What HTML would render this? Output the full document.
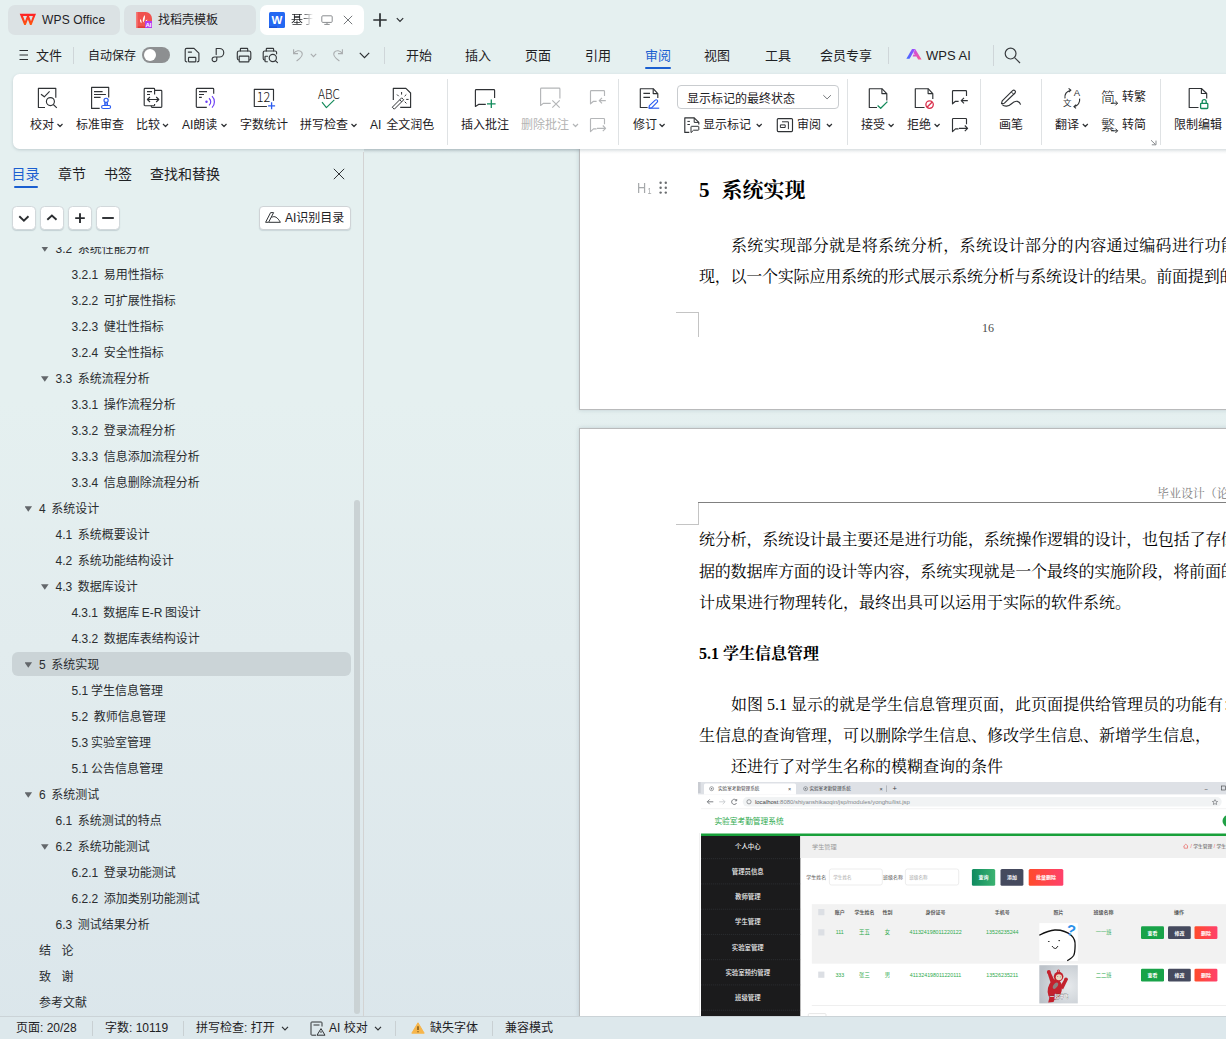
<!DOCTYPE html>
<html lang="zh-CN">
<head>
<meta charset="utf-8">
<title>WPS Office</title>
<style>
*{box-sizing:border-box;margin:0;padding:0}
html,body{width:1226px;height:1039px;overflow:hidden}
body{position:relative;background:linear-gradient(180deg,#e5f0f0 0,#e5f0f0 400px,#e2ecee 650px,#dbe6eb 1039px);font-family:"Liberation Sans","Noto Sans CJK SC",sans-serif;color:#1e2124;font-size:12px}
.abs{position:absolute}
.t{position:absolute;white-space:nowrap;line-height:1}
svg{position:absolute;overflow:visible}
/* title tabs */
.tab{position:absolute;top:5px;height:30px;border-radius:7px;background:#dbe2e4}
/* menu */
.menu .t{font-size:13px;top:49px;color:#1e2124}
.vsep{position:absolute;width:1px;background:#cfd6d9}
/* ribbon */
#ribbon{position:absolute;left:13px;top:74px;width:1220px;height:75px;background:#fff;border-radius:6.500px 0 0 6.500px;box-shadow:0 1px 3px rgba(120,140,150,.35)}
.rl{position:absolute;white-space:nowrap;line-height:1;font-size:12px;top:119px;color:#1e2124}
.rsep{position:absolute;top:79px;height:66px;width:1px;background:#dfe2e4}
.dis{color:#b4b4b4}
/* side panel */
#side{position:absolute;left:0;top:152px;width:363px;height:864px}
.ptab{position:absolute;top:167px;font-size:14px;line-height:1;white-space:nowrap;color:#1e2124}
.sbtn{position:absolute;top:206px;width:23.500px;height:23.500px;border:1px solid #d2d8db;border-radius:4.500px;background:#fff;box-shadow:0 1px 1px rgba(120,140,150,.3)}
#tree{position:absolute;left:0;top:247px;width:352px;height:769px;overflow:hidden}
.ti{position:absolute;left:0;height:26px;line-height:26px;font-size:12px;white-space:nowrap;color:#2a2d30;word-spacing:-.5px}
.tri{position:absolute;width:7.600px;height:5.600px;background:#63676b;clip-path:polygon(0 0,100% 0,50% 100%)}
/* doc */
#doc{position:absolute;left:364px;top:149px;width:862px;height:867px;overflow:hidden}
.page{position:absolute;background:#fff;border:1px solid #b9babb;box-shadow:0 0 4px rgba(110,130,140,.3)}
.dt{position:absolute;white-space:nowrap;line-height:1;font-family:"Liberation Serif","Noto Serif CJK SC",serif;color:#000}
.body{font-size:16px;letter-spacing:.2px}
/* status */
#status{position:absolute;left:0;top:1016px;width:1226px;height:23px;background:#dde8ec;border-top:1px solid #cbd3d7}
#status .t{top:5px;font-size:12px;color:#1e2124}
#status .vsep{top:4px;height:15px;background:#c9d0d3}
</style>
</head>
<body>

<!-- ===== TITLE TABS ===== -->
<div id="titlebar">
  <div class="tab" style="left:8px;width:112px"></div>
  <div class="tab" style="left:124px;width:132px"></div>
  <div class="tab" style="left:260px;width:104px;background:#fff"></div>
  <!-- WPS logo -->
  <svg style="left:18px;top:12px" width="20" height="15" viewBox="18 12 20 15">
    <defs><linearGradient id="wg" x1="0" y1="0" x2="0" y2="1"><stop offset="0" stop-color="#ff1f26"/><stop offset="1" stop-color="#ff5a0e"/></linearGradient></defs>
    <path d="M19.700 13.800H36L31.600 25H30L27.900 19.600L25.800 25H24.200Z M23 16L25 21.200L27 16Z M29.300 16H29L31 21.200L32.900 16Z" fill="url(#wg)" fill-rule="evenodd"/>
  </svg>
  <div class="t" style="left:42px;top:14px;font-size:12px;letter-spacing:.15px">WPS Office</div>
  <!-- docer icon -->
  <svg style="left:136px;top:12px" width="16" height="16" viewBox="0 0 16 16">
    <path d="M0 0H9.5A6.5 6.5 0 0 1 16 6.5V16H0Z" fill="#f0524f"/>
    <rect x="0" y="14.4" width="16" height="1.6" fill="#e23a38"/>
    <rect x="0" y="0" width="1.6" height="16" fill="#f47a77"/>
    <path d="M5.4 11.2C3.9 9.8 3.7 8 4.4 6.9C5.4 8 5.8 9.6 5.4 11.2ZM7.2 10.6C6.2 7.8 7.2 4.6 8.8 2.9C9.3 5.4 8.7 8.6 7.2 10.6ZM8.6 10.9C9 9.3 10.2 8 11.4 7.6C11.2 9.1 10.1 10.4 8.6 10.9Z" fill="#fff"/>
    <rect x="9" y="9" width="7" height="7" fill="#b43cf0"/>
    <text x="12.5" y="14.8" font-size="6" font-weight="700" fill="#fff" text-anchor="middle" font-family="Liberation Sans,sans-serif">AI</text>
  </svg>
  <div class="t" style="left:158px;top:14px;font-size:12px">找稻壳模板</div>
  <!-- W doc icon -->
  <svg style="left:269px;top:12px" width="16" height="16" viewBox="0 0 16 16">
    <rect width="16" height="16" rx="1.5" fill="#2468f2"/>
    <rect x="0" y="14.4" width="8" height="1.6" fill="#1a55d8"/>
    <text x="8" y="12.2" font-size="11.5" font-weight="700" fill="#fff" text-anchor="middle" font-family="Liberation Sans,sans-serif">W</text>
  </svg>
  <div class="t" style="left:291px;top:14px;font-size:12px;width:25px;overflow:hidden;-webkit-mask-image:linear-gradient(90deg,#000 38%,transparent 88%);mask-image:linear-gradient(90deg,#000 38%,transparent 88%)">基于实</div>
  <svg style="left:321px;top:15px" width="12" height="10" viewBox="0 0 12 10" fill="none" stroke="#8a8d90" stroke-width="1">
    <rect x="0.8" y="0.8" width="10.4" height="6.6" rx="1"/><path d="M6 7.4V9.3M3.3 9.4H8.7"/>
  </svg>
  <svg style="left:343px;top:15px" width="10" height="10" viewBox="0 0 10 10" fill="none" stroke="#75787b" stroke-width="1">
    <path d="M0.8 0.8L9.2 9.2M9.2 0.8L0.8 9.2"/>
  </svg>
  <svg style="left:373px;top:13px" width="14" height="14" viewBox="0 0 14 14" fill="none" stroke="#2b2e31" stroke-width="1.7">
    <path d="M7 0.3V13.7M0.3 7H13.7"/>
  </svg>
  <svg style="left:396px;top:17px" width="8" height="6" viewBox="0 0 8 6" fill="none" stroke="#2b2e31" stroke-width="1.2">
    <path d="M0.8 1.2L4 4.4L7.2 1.2"/>
  </svg>
</div>

<!-- ===== MENU ROW ===== -->
<div class="menu">
  <svg style="left:19px;top:49px" width="10" height="12" viewBox="0 0 10 12" fill="none" stroke="#2b2e31" stroke-width="1">
    <path d="M0.5 1.5H9M0.5 6H9M0.5 10.5H9"/>
  </svg>
  <div class="t" style="left:36px">文件</div>
  <div class="vsep" style="left:73px;top:47px;height:17px"></div>
  <div class="t" style="left:88px;font-size:12px;top:50px">自动保存</div>
  <div class="abs" style="left:142px;top:47px;width:28px;height:16px;border-radius:8px;background:#8d8f91"></div>
  <div class="abs" style="left:144px;top:49px;width:12px;height:12px;border-radius:6px;background:#fff"></div>
  <!-- save / export / print / preview -->
  <svg style="left:180px;top:42px" width="105" height="26" viewBox="180 42 105 26" fill="none" stroke="#35383b" stroke-width="1.150" stroke-linejoin="round" stroke-linecap="round">
    <path d="M186.800 61.800H186.400A1.400 1.400 0 0 1 185.200 60.400V49.800A1.500 1.500 0 0 1 186.700 48.300H194L198.900 53.200V60.400A1.400 1.400 0 0 1 197.600 61.800H197.300"/>
    <rect x="188.500" y="57.400" width="7.300" height="4.400" rx=".5"/><path d="M188.300 52.100H191.500"/>
    <path d="M216.200 54.600V48.500H219.500A4.250 4.250 0 0 1 219.500 57H214.700A2.350 2.350 0 1 0 216.800 59.400V57.200"/>
    <path d="M240.400 51V48.900A.6 .6 0 0 1 241 48.300H247.100A.6 .6 0 0 1 247.700 48.900V51"/>
    <rect x="237.300" y="51" width="13.500" height="9" rx="1.800"/>
    <rect x="239.200" y="56.100" width="9.700" height="5.700" rx=".6" fill="#e5f0f0"/>
    <path d="M266.300 51V48.900A.6 .6 0 0 1 266.900 48.300H273A.6 .6 0 0 1 273.600 48.900V51"/>
    <path d="M264.800 60H264.600A1.600 1.600 0 0 1 263.200 58.400V52.600A1.600 1.600 0 0 1 264.800 51H275A1.600 1.600 0 0 1 276.600 52.600V53.800"/>
    <path d="M267.400 61.700H265.600A.6 .6 0 0 1 265 61.100V56.800A.6 .6 0 0 1 265.600 56.200H267.600"/>
    <circle cx="272.800" cy="58" r="3.600"/><path d="M275.400 60.600L277.500 62.700"/>
  </svg>
  <!-- undo -->
  <svg style="left:292px;top:48px" width="12" height="14" viewBox="0 0 12 14" fill="none" stroke="#a9acae" stroke-width="1.1">
    <path d="M1.6 1.2V5.6H6M1.8 5.4C3.6 2.2 8 1.8 9.8 4.4C11.4 7 9 10 4.6 13"/>
  </svg>
  <svg style="left:310px;top:53px" width="7" height="5" viewBox="0 0 7 5" fill="none" stroke="#a9acae" stroke-width="1.1"><path d="M0.8 0.8L3.5 3.6L6.2 0.8"/></svg>
  <!-- redo -->
  <svg style="left:332px;top:48px" width="12" height="14" viewBox="0 0 12 14" fill="none" stroke="#a9acae" stroke-width="1.1">
    <path d="M10.4 1.2V5.6H6M10.2 5.4C8.4 2.2 4 1.8 2.2 4.4C0.6 7 3 10 7.4 13"/>
  </svg>
  <svg style="left:359px;top:52px" width="11" height="7" viewBox="0 0 11 7" fill="none" stroke="#2b2e31" stroke-width="1.2"><path d="M0.8 0.9L5.5 5.6L10.2 0.9"/></svg>
  <div class="vsep" style="left:384px;top:47px;height:17px"></div>
  <div class="t" style="left:406px">开始</div>
  <div class="t" style="left:465px">插入</div>
  <div class="t" style="left:525px">页面</div>
  <div class="t" style="left:585px">引用</div>
  <div class="t" style="left:645px;color:#1b5fd0">审阅</div>
  <div class="abs" style="left:645px;top:67px;width:26px;height:2px;background:#1b5fd0;border-radius:1px"></div>
  <div class="t" style="left:704px">视图</div>
  <div class="t" style="left:765px">工具</div>
  <div class="t" style="left:820px">会员专享</div>
  <div class="vsep" style="left:888px;top:47px;height:17px"></div>
  <!-- WPS AI logo -->
  <svg style="left:906px;top:48px" width="16" height="13" viewBox="0 0 16 13">
    <defs><linearGradient id="ai1" x1="0" y1="1" x2="1" y2="0"><stop offset="0" stop-color="#3b6cff"/><stop offset="1" stop-color="#a24bff"/></linearGradient>
    <linearGradient id="ai2" x1="0" y1="0" x2="1" y2="1"><stop offset="0" stop-color="#c04cf5"/><stop offset="1" stop-color="#ff5a8a"/></linearGradient></defs>
    <path d="M0.4 10.8L6 1H9.2L3.6 10.8Z" fill="url(#ai1)"/>
    <path d="M7.4 5.2L9.2 1L15.6 11.6H12.2L10.4 8.6H6.6L7.4 6.4H9.2Z" fill="url(#ai2)"/>
  </svg>
  <div class="t" style="left:926px">WPS AI</div>
  <div class="vsep" style="left:993px;top:45px;height:21px"></div>
  <svg style="left:1004px;top:47px" width="17" height="17" viewBox="0 0 17 17" fill="none" stroke="#3a3d40" stroke-width="1.2">
    <circle cx="6.6" cy="6.6" r="5.4"/><path d="M10.6 10.6L16 16"/>
  </svg>
</div>

<!-- ===== RIBBON ===== -->
<div id="ribbon"></div>
<div id="ribbon-items">
<div class="abs" style="left:677px;top:85px;width:162px;height:24px;border:1px solid #c9cccf;border-radius:4px;background:#fff"></div>
<svg style="left:0;top:75px" width="1226" height="75" viewBox="0 75 1226 75" fill="none" stroke="#2f3235" stroke-width="1.15" stroke-linejoin="round">
  <!-- 1 校对 -->
  <path d="M45 107.5H38.4V88.4H55.8V97.8"/><path d="M41 94.2L44.3 96.8L49.6 91.4"/><circle cx="50.4" cy="101.6" r="4"/><path d="M53.3 104.5L56.8 107.8"/>
  <!-- 2 标准审查 -->
  <path d="M99.7 108.4H91.6V87.4H108.7V97.5"/><path d="M94 91.6H102.6M94 94.5H105.9M94 97.4H100.6"/>
  <g stroke="#2b5cf0"><circle cx="106.1" cy="100.3" r="2.1"/><path d="M105 102.3V105.4M107.2 102.3V105.4" stroke-width="1.6"/><rect x="101.6" y="105.5" width="9" height="3" rx="1.5"/></g>
  <!-- 3 比较 -->
  <path d="M154.6 94.6V89.2A.8 .8 0 0 0 153.8 88.4H145A.8 .8 0 0 0 144.2 89.2V104.9A.8 .8 0 0 0 145 105.7H153.8A.8 .8 0 0 0 154.6 104.9V104"/>
  <path d="M154.6 90.4H161A.8 .8 0 0 1 161.8 91.2V106.6A.8 .8 0 0 1 161 107.4H152.1A.8 .8 0 0 1 151.3 106.6V105.7"/>
  <path d="M147 91.6H152M147 94.5H150M147.6 99.5H158.6M150 97L147.4 99.5L150 102M156.2 97L158.8 99.5L156.2 102"/>
  <!-- 4 AI朗读 -->
  <path d="M206.8 107.4H197.1A.8 .8 0 0 1 196.3 106.6V89.2A.8 .8 0 0 1 197.1 88.4H212.9A.8 .8 0 0 1 213.7 89.2V93.8"/><path d="M199 91.6H207M199 94.5H204M199 97.4H201.8"/>
  <g stroke="#6a3df5"><circle cx="206.5" cy="101.8" r="1.2" fill="#6a3df5" stroke="none"/><path d="M209 98.2A4.6 4.6 0 0 1 209 105.4M212 96.2A8 8 0 0 1 212 107.6"/></g>
  <!-- 5 字数统计 -->
  <path d="M266.9 106.5H254.3V89.4H273.5V100.8"/>
  <g stroke="#2b5cf0" stroke-width="1.3"><path d="M271.6 102.3V109.3M268.1 105.8H275.1"/></g>
  <!-- 6 拼写检查 -->
  <path d="M322 102.2L326.4 107.6L334.3 99.8" stroke="#138a5a"/>
  <!-- 7 AI 全文润色 -->
  <path d="M393.3 100V88.4H405.9L410.6 93V107.4H400.2"/>
  <path d="M401.7 97.8L403.7 99.8L394.3 109.2L392.3 107.2Z M399.7 99.8L401.7 101.8" stroke-width="1"/>
  <path d="M401.6 92V94.6M404.6 96.2L406.3 94.5M406.2 99.4H408.6M404.7 101.7L406.4 103.4M397 94.5L398.7 96.2" stroke-width="1"/>
  <!-- 8 插入批注 -->
  <path d="M485.8 104.4H478.5L475.4 106.5V90.4A.8 .8 0 0 1 476.2 89.6H493.8A.8 .8 0 0 1 494.6 90.4V97.9"/>
  <path d="M491.3 99.5V108.1M487 103.8H495.6" stroke="#0f8a5a" stroke-width="1.3"/>
  <!-- 9 删除批注 (disabled) -->
  <g stroke="#b4b6b8"><path d="M550.7 103.4H543.3L540.6 105.5V88.9A.8 .8 0 0 1 541.4 88.1H559.1A.8 .8 0 0 1 559.9 88.9V98.5"/><path d="M552.3 100.3L559.7 107.7M559.7 100.3L552.3 107.7"/>
  <!-- 10 prev/next (disabled) -->
  <path d="M596.6 101.3H593.5L590.5 103.8V91.4A.8 .8 0 0 1 591.3 90.6H603.7A.8 .8 0 0 1 604.5 91.4V96"/><path d="M605.8 100.6H599.2M602 97.8L599.2 100.6L602 103.4"/>
  <path d="M596.6 128.8H593.5L590.5 131.6V119.3A.8 .8 0 0 1 591.3 118.5H603.7A.8 .8 0 0 1 604.5 119.3V124.2"/><path d="M597 128.3H605.6M602.8 125.5L605.6 128.3L602.8 131.1"/></g>
  <!-- 11 修订 -->
  <path d="M647.6 107.5H640.3V88.7H653.2L657.8 93.6V97.9"/><path d="M653.2 88.7V93.6H657.8"/><path d="M643.4 93.3H650M643.4 97.3H650"/>
  <g stroke="#2b5cf0"><path d="M655.2 100.2A1.4 1.4 0 0 1 657.2 102.2L651.6 107.8L648.9 108.2L649.4 105.6Z"/><path d="M649 108.2H659.2"/></g>
  <!-- 12a 显示标记 -->
  <path d="M689.3 132.4H684.8V117.8H694.2L698.8 122.4V124.4"/><path d="M694.2 117.8V122.4H698.8" stroke-width="1"/><path d="M687.4 121.4H689.9M687.4 124.5H689.9" stroke-width="1"/>
  <path d="M691 132.6V126.9A.6 .6 0 0 1 691.6 126.3H698.2A.6 .6 0 0 1 698.8 126.9V129.6A.6 .6 0 0 1 698.2 130.2H693.6Z" stroke-width="1"/>
  <!-- 12b 审阅 -->
  <rect x="777.3" y="118.6" width="15.2" height="13" rx="1"/><rect x="780.4" y="124.9" width="4.8" height="2.6" stroke-width="1"/><path d="M782 121.8H788.4V129.2" stroke-width="1"/>
  <!-- 13 接受 -->
  <path d="M877 107.5H869.3V88.7H881.9L886.8 93.6V100.4"/><path d="M881.9 88.7V93.6H886.8"/><path d="M877.6 105.6L880.7 108.3L887.4 101.6" stroke="#138a5a" stroke-width="1.3"/>
  <!-- 14 拒绝 -->
  <path d="M924.5 107.5H915.3V88.7H928.1L932.8 93.6V99.1"/><path d="M928.1 88.7V93.6H932.8"/>
  <g stroke="#d9304c" stroke-width="1.3"><circle cx="929.6" cy="104.6" r="3.7"/><path d="M927 107.2L932.2 102"/></g>
  <!-- 15 prev/next -->
  <path d="M958.6 101.3H955.5L952.5 103.8V91.4A.8 .8 0 0 1 953.3 90.6H965.7A.8 .8 0 0 1 966.5 91.4V96"/><path d="M967.8 100.6H961.2M964 97.8L961.2 100.6L964 103.4"/>
  <path d="M958.6 128.8H955.5L952.5 131.6V119.3A.8 .8 0 0 1 953.3 118.5H965.7A.8 .8 0 0 1 966.5 119.3V124.2"/><path d="M959 128.3H967.6M964.8 125.5L967.6 128.3L964.8 131.1"/>
  <!-- 16 画笔 -->
  <path d="M1012.6 90.6A1.7 1.7 0 0 1 1015 93L1004.4 103.2L1001.5 103.7L1002.2 100.8Z"/><path d="M1011.3 91.9L1013.7 94.3" stroke-width="1"/>
  <path d="M1002.2 104.6C1004.5 106.8 1008.5 106.6 1011.2 104C1013.2 102 1015.4 100.8 1017.4 101.4C1019 101.9 1020.2 103.2 1020.6 104.6"/>
  <!-- 17 翻译 -->
  <path d="M1065 98.4C1064.2 94.6 1066.6 91 1070.6 90.2M1068.6 88.4L1070.9 90.2L1068.8 92.2"/>
  <path d="M1079.6 98.6C1080.2 102.4 1078 105.8 1074.2 106.6M1076.2 104.6L1073.9 106.6L1076 108.4"/>
  <!-- 18 arrows -->
  <path d="M1111 103.2H1117.6M1115.4 101L1117.6 103.2L1115.4 105.4" stroke-width="1"/>
  <path d="M1111 130.8H1117.6M1115.4 128.6L1117.6 130.8L1115.4 133" stroke-width="1"/>
  <path d="M1151 140.2L1155.6 144.6M1156 140.6V144.8H1151.8" stroke="#8a8d90" stroke-width="1"/>
  <!-- 19 限制编辑 -->
  <path d="M1198.5 107.5H1189.2V88.5H1201.4L1206.7 93.5V98.5"/><path d="M1201.4 88.5V93.5H1206.7"/>
  <g stroke="#138a5a" stroke-width="1.3"><rect x="1200.6" y="103.3" width="7.2" height="5.2" rx=".8"/><path d="M1202.2 103.2V101.6A2 2 0 0 1 1206.2 101.6V103.2"/></g>
  <!-- chevrons -->
  <g stroke-width="1.2">
  <path d="M57.5 124L60 126.5L62.5 124"/><path d="M163 124L165.500 126.5L168 124"/><path d="M221.500 124L224 126.5L226.500 124"/><path d="M351.500 124L354 126.500L356.500 124"/>
  <path d="M573 124L575.500 126.500L578 124" stroke="#b4b6b8"/><path d="M659.600 124L662.100 126.500L664.600 124"/><path d="M756.700 124L759.200 126.500L761.700 124"/><path d="M826.900 124L829.400 126.500L831.900 124"/>
  <path d="M888.600 124L891.100 126.500L893.600 124"/><path d="M934.600 124L937.100 126.500L939.600 124"/><path d="M1082.800 124L1085.300 126.500L1087.800 124"/>
  <path d="M823.300 95.200L827.100 98.900L830.900 95.200" stroke="#75787b" stroke-width="1"/>
  </g>
  <g stroke="none" fill="#2f3235" font-family="Liberation Sans,Noto Sans CJK SC,sans-serif">
    <text x="263.600" y="102" font-size="13.500" text-anchor="middle" font-weight="300" font-family="Noto Sans CJK SC,sans-serif" fill="#111" textLength="13.500" lengthAdjust="spacingAndGlyphs">12</text>
    <text x="329" y="99" font-size="13" text-anchor="middle" font-weight="300" font-family="Noto Sans CJK SC,sans-serif" fill="#111" textLength="22" lengthAdjust="spacingAndGlyphs">ABC</text>
    <text x="1076.800" y="96.400" font-size="9.500" text-anchor="middle">A</text>
    <text x="1067.200" y="105.700" font-size="8.500" text-anchor="middle">文</text>
    <text x="1108" y="101.800" font-size="14" font-weight="300" text-anchor="middle" fill="#111">简</text>
    <text x="1108" y="129.800" font-size="14" font-weight="300" text-anchor="middle" fill="#111">繁</text>
  </g>
</svg>
<div class="rsep" style="left:447px"></div>
<div class="rsep" style="left:618px"></div>
<div class="rsep" style="left:847px"></div>
<div class="rsep" style="left:980px"></div>
<div class="rsep" style="left:1041px"></div>
<div class="rsep" style="left:1160px"></div>
<div class="rl" style="left:30px">校对</div>
<div class="rl" style="left:76px">标准审查</div>
<div class="rl" style="left:136px">比较</div>
<div class="rl" style="left:182px">AI朗读</div>
<div class="rl" style="left:240px">字数统计</div>
<div class="rl" style="left:300px">拼写检查</div>
<div class="rl" style="left:370px;word-spacing:1.500px">AI 全文润色</div>
<div class="rl" style="left:461px">插入批注</div>
<div class="rl dis" style="left:521px">删除批注</div>
<div class="rl" style="left:633px">修订</div>
<div class="rl" style="left:687px;top:93px">显示标记的最终状态</div>
<div class="rl" style="left:703px">显示标记</div>
<div class="rl" style="left:797px">审阅</div>
<div class="rl" style="left:861px">接受</div>
<div class="rl" style="left:907px">拒绝</div>
<div class="rl" style="left:999px">画笔</div>
<div class="rl" style="left:1055px">翻译</div>
<div class="rl" style="left:1122px;top:91px">转繁</div>
<div class="rl" style="left:1122px;top:119px">转简</div>
<div class="rl" style="left:1174px">限制编辑</div>
</div>

<!-- ===== SIDE PANEL ===== -->
<div id="side"></div>
<div class="ptab" style="left:11.500px;color:#1b5fd0">目录</div>
<div class="abs" style="left:14px;top:186px;width:24px;height:2px;background:#1b5fd0;border-radius:1px"></div>
<div class="ptab" style="left:58px">章节</div>
<div class="ptab" style="left:104px">书签</div>
<div class="ptab" style="left:150px">查找和替换</div>
<svg style="left:333px;top:168px" width="12" height="12" viewBox="0 0 12 12" fill="none" stroke="#2f3235" stroke-width="1"><path d="M0.800 0.800L11.200 11.200M11.200 0.800L0.800 11.200"/></svg>
<div class="sbtn" style="left:12px"></div>
<div class="sbtn" style="left:40px"></div>
<div class="sbtn" style="left:68px"></div>
<div class="sbtn" style="left:96px"></div>
<svg style="left:12px;top:206px" width="108" height="23" viewBox="0 0 108 23" fill="none" stroke="#2a2d30" stroke-width="1.900">
  <path d="M7.300 10.300L11.900 14.600L16.500 10.300"/><path d="M35.300 13.800L39.900 9.500L44.500 13.800"/><path d="M63.200 12.100H72.800M68 7.300V16.900"/><path d="M90.200 12H101.800"/>
</svg>
<div class="abs" style="left:259px;top:206px;width:92px;height:24px;border:1px solid #cfd3d6;border-radius:4px;background:#fff;box-shadow:0 1px 1px rgba(120,140,150,.25)"></div>
<svg style="left:265px;top:212px" width="16" height="11" viewBox="0 0 16 11" fill="none" stroke="#2f3235" stroke-width="1" stroke-linejoin="round"><path d="M0.600 10.300L5.600 0.600H8.600L3.600 10.300Z"/><path d="M6.600 5.400C9.600 3.400 12.600 5.400 15.400 10.300H3.800"/></svg>
<div class="t" style="left:285px;top:212px;font-size:12px">AI识别目录</div>
<div id="tree">
<div class="tri" style="left:41px;top:-0.8px"></div>
<div class="ti" style="left:55.5px;top:-11px">3.2&nbsp; 系统性能分析</div>
<div class="ti" style="left:71.5px;top:15px">3.2.1&nbsp; 易用性指标</div>
<div class="ti" style="left:71.5px;top:41px">3.2.2&nbsp; 可扩展性指标</div>
<div class="ti" style="left:71.5px;top:67px">3.2.3&nbsp; 健壮性指标</div>
<div class="ti" style="left:71.5px;top:93px">3.2.4&nbsp; 安全性指标</div>
<div class="tri" style="left:41px;top:129.2px"></div>
<div class="ti" style="left:55.5px;top:119px">3.3&nbsp; 系统流程分析</div>
<div class="ti" style="left:71.5px;top:145px">3.3.1&nbsp; 操作流程分析</div>
<div class="ti" style="left:71.5px;top:171px">3.3.2&nbsp; 登录流程分析</div>
<div class="ti" style="left:71.5px;top:197px">3.3.3&nbsp; 信息添加流程分析</div>
<div class="ti" style="left:71.5px;top:223px">3.3.4&nbsp; 信息删除流程分析</div>
<div class="tri" style="left:24.5px;top:259.2px"></div>
<div class="ti" style="left:39px;top:249px">4&nbsp; 系统设计</div>
<div class="ti" style="left:55.5px;top:275px">4.1&nbsp; 系统概要设计</div>
<div class="ti" style="left:55.5px;top:301px">4.2&nbsp; 系统功能结构设计</div>
<div class="tri" style="left:41px;top:337.2px"></div>
<div class="ti" style="left:55.5px;top:327px">4.3&nbsp; 数据库设计</div>
<div class="ti" style="left:71.5px;top:353px;letter-spacing:-.08px">4.3.1&nbsp; 数据库 E-R 图设计</div>
<div class="ti" style="left:71.5px;top:379px">4.3.2&nbsp; 数据库表结构设计</div>
<div class="abs" style="left:12px;top:405px;width:339px;height:24px;border-radius:6px;background:#cbd4d7"></div>
<div class="tri" style="left:24.5px;top:415.2px"></div>
<div class="ti" style="left:39px;top:405px">5&nbsp; 系统实现</div>
<div class="ti" style="left:71.5px;top:431px">5.1 学生信息管理</div>
<div class="ti" style="left:71.5px;top:457px">5.2&nbsp; 教师信息管理</div>
<div class="ti" style="left:71.5px;top:483px">5.3 实验室管理</div>
<div class="ti" style="left:71.5px;top:509px">5.1 公告信息管理</div>
<div class="tri" style="left:24.5px;top:545.2px"></div>
<div class="ti" style="left:39px;top:535px">6&nbsp; 系统测试</div>
<div class="ti" style="left:55.5px;top:561px">6.1&nbsp; 系统测试的特点</div>
<div class="tri" style="left:41px;top:597.2px"></div>
<div class="ti" style="left:55.5px;top:587px">6.2&nbsp; 系统功能测试</div>
<div class="ti" style="left:71.5px;top:613px">6.2.1&nbsp; 登录功能测试</div>
<div class="ti" style="left:71.5px;top:639px">6.2.2&nbsp; 添加类别功能测试</div>
<div class="ti" style="left:55.5px;top:665px">6.3&nbsp; 测试结果分析</div>
<div class="ti" style="left:39px;top:691px;word-spacing:.2px">结&nbsp;&nbsp;&nbsp;论</div>
<div class="ti" style="left:39px;top:717px;word-spacing:.2px">致&nbsp;&nbsp;&nbsp;谢</div>
<div class="ti" style="left:39px;top:743px">参考文献</div>
</div>
<div class="abs" style="left:354px;top:500px;width:6px;height:514px;border-radius:3px;background:#cad2d4"></div>
<div class="abs" style="left:363px;top:152px;width:1px;height:864px;background:#d3d3d3"></div>

<!-- ===== DOCUMENT ===== -->
<div id="doc"><div class="abs" style="left:-364px;top:-149px;width:1226px;height:1039px">
  <div class="page" style="left:579px;top:40px;width:700px;height:370px"></div>
  <div class="page" style="left:579px;top:428px;width:700px;height:700px"></div>
  <!-- page 1 -->
  <div class="t" style="left:637px;top:180px;font-size:15px;color:#a6a9ab;font-weight:300;letter-spacing:-.5px;transform:scaleX(.85);transform-origin:0 0">H<span style="font-size:8.500px;position:relative;top:.5px;left:2px">1</span></div>
  <svg style="left:659px;top:181px" width="9" height="13" viewBox="659 181 9 13" fill="#6a6d70"><circle cx="660.600" cy="182.800" r="1.200"/><circle cx="665.800" cy="182.800" r="1.200"/><circle cx="660.600" cy="187.700" r="1.200"/><circle cx="665.800" cy="187.700" r="1.200"/><circle cx="660.600" cy="192.600" r="1.200"/><circle cx="665.800" cy="192.600" r="1.200"/></svg>
  <div class="dt" style="left:699px;top:180px;font-size:21px;font-weight:700;word-spacing:.7px">5&nbsp; 系统实现</div>
  <div class="dt body" style="left:731px;top:238px;letter-spacing:.33px">系统实现部分就是将系统分析，系统设计部分的内容通过编码进行功能实</div>
  <div class="dt body" style="left:699px;top:269px;letter-spacing:-.23px">现，以一个实际应用系统的形式展示系统分析与系统设计的结果。前面提到的系</div>
  <div class="abs" style="left:676px;top:312px;width:23px;height:1px;background:#c4c4c4"></div>
  <div class="abs" style="left:698px;top:312px;width:1px;height:25px;background:#c4c4c4"></div>
  <div class="dt" style="left:982px;top:322px;font-size:12px;color:#4a4a4a">16</div>
  <!-- page 2 -->
  <div class="dt" style="left:1157px;top:488px;font-size:12px;color:#808080;letter-spacing:-.06px">毕业设计（论文）</div>
  <div class="abs" style="left:698px;top:502px;width:540px;height:1px;background:#808080"></div>
  <div class="abs" style="left:698px;top:503px;width:1px;height:22px;background:#c4c4c4"></div>
  <div class="abs" style="left:676px;top:524px;width:23px;height:1px;background:#c4c4c4"></div>
  <div class="dt body" style="left:699px;top:532px;letter-spacing:-.18px">统分析，系统设计最主要还是进行功能，系统操作逻辑的设计，也包括了存储数</div>
  <div class="dt body" style="left:699px;top:564px;letter-spacing:-.19px">据的数据库方面的设计等内容，系统实现就是一个最终的实施阶段，将前面的设</div>
  <div class="dt body" style="left:699px;top:595px;letter-spacing:0">计成果进行物理转化，最终出具可以运用于实际的软件系统。</div>
  <div class="dt" style="left:699px;top:646px;font-size:16px;font-weight:700">5.1 学生信息管理</div>
  <div class="dt body" style="left:731px;top:697px;letter-spacing:0">如图 5.1 显示的就是学生信息管理页面，此页面提供给管理员的功能有：学</div>
  <div class="dt body" style="left:699px;top:728px;letter-spacing:0">生信息的查询管理，可以删除学生信息、修改学生信息、新增学生信息，</div>
  <div class="dt body" style="left:731px;top:759px;letter-spacing:0">还进行了对学生名称的模糊查询的条件</div>
  <!-- embedded screenshot -->
  <svg id="shot" style="left:698px;top:782px" width="528" height="234" viewBox="698 782 528 234" font-family="Liberation Sans,Noto Sans CJK SC,sans-serif">
    <rect x="698" y="782" width="528" height="234" fill="#fff"/>
    <!-- browser chrome -->
    <rect x="698" y="782" width="528" height="12.400" fill="#dee1e6"/>
    <path d="M704 794.400V785A1.500 1.500 0 0 1 705.500 783.500H794.500A1.500 1.500 0 0 1 796 785V794.400Z" fill="#fff"/>
    <rect x="698" y="782" width="2.600" height="11" fill="#c9ccd2"/>
    <g fill="#3c4043" font-size="4.600">
      <circle cx="711.600" cy="788.700" r="2" fill="none" stroke="#6a6e73" stroke-width=".6"/><circle cx="711.600" cy="788.700" r=".8" fill="#6a6e73"/>
      <text x="718" y="790.400">实验室考勤管理系统</text>
      <text x="788" y="790.600" font-size="5.500">×</text>
      <circle cx="805.600" cy="788.700" r="2" fill="none" stroke="#6a6e73" stroke-width=".6"/><circle cx="805.600" cy="788.700" r=".8" fill="#6a6e73"/>
      <text x="809.400" y="790.400">实验室考勤管理系统</text>
      <text x="879.500" y="790.600" font-size="5.500">×</text>
      <rect x="886.400" y="785.400" width=".5" height="6.600" fill="#8a8e94"/>
      <text x="892.600" y="791.200" font-size="7.500">+</text>
      <text x="1204.500" y="790.600" font-size="6">−</text>
      <rect x="1221.500" y="786" width="4" height="4" fill="none" stroke="#3c4043" stroke-width=".6"/>
    </g>
    <!-- address row -->
    <rect x="742.700" y="797" width="479" height="9.600" rx="4.800" fill="#f1f3f4"/>
    <g fill="none" stroke="#5f6368" stroke-width=".8">
      <path d="M713.300 801.800H707.400M709.700 799.400L707.300 801.800L709.700 804.200"/>
      <path d="M719.200 801.800H725M722.700 799.400L725.100 801.800L722.700 804.200" stroke="#c2c5c9"/>
      <path d="M736.400 800.400A2.600 2.600 0 1 0 736.600 803M736.700 799V800.800H734.900"/>
      <circle cx="749" cy="801.800" r="2.100" stroke-width=".6"/>
      <path d="M1215 799.600L1215.800 801.300L1217.600 801.500L1216.300 802.700L1216.600 804.500L1215 803.600L1213.400 804.500L1213.700 802.700L1212.400 801.500L1214.200 801.300Z" stroke-width=".6"/>
    </g>
    <text x="755" y="803.700" font-size="5.950" fill="#3c4043">localhost<tspan fill="#80868b">:8080/shiyanshikaoqin/jsp/modules/yonghu/list.jsp</tspan></text>
    <rect x="701" y="808.600" width="525" height=".5" fill="#e6e6e6"/>
    <!-- app header -->
    <text x="714.400" y="824.300" font-size="7.700" fill="#2eaa4e">实验室考勤管理系统</text>
    <circle cx="1228.500" cy="821" r="6" fill="#21a146"/>
    <rect x="701" y="833.500" width="525" height="2.500" fill="#18a03a"/>
    <rect x="699" y="833" width=".5" height="183" fill="#e2e2e2"/>
    <!-- sidebar -->
    <rect x="701" y="836" width="99.300" height="180" fill="#1b1b1c"/>
    <g fill="#f2f2f2" font-size="6.400" font-weight="500">
    <text x="747.800" y="848.6" text-anchor="middle">个人中心</text>
    <path d="M701 858.7H800.300" stroke="#3a3f45" stroke-width=".5" stroke-dasharray="1.200 .8"/>
    <text x="747.800" y="873.8" text-anchor="middle">管理员信息</text>
    <path d="M701 883.9H800.300" stroke="#3a3f45" stroke-width=".5" stroke-dasharray="1.200 .8"/>
    <text x="747.800" y="899.1" text-anchor="middle">教师管理</text>
    <path d="M701 909.2H800.300" stroke="#3a3f45" stroke-width=".5" stroke-dasharray="1.200 .8"/>
    <text x="747.800" y="924.3" text-anchor="middle">学生管理</text>
    <path d="M701 934.4H800.300" stroke="#3a3f45" stroke-width=".5" stroke-dasharray="1.200 .8"/>
    <text x="747.800" y="949.6" text-anchor="middle">实验室管理</text>
    <path d="M701 959.7H800.300" stroke="#3a3f45" stroke-width=".5" stroke-dasharray="1.200 .8"/>
    <text x="747.800" y="974.8" text-anchor="middle">实验室预约管理</text>
    <path d="M701 984.9H800.300" stroke="#3a3f45" stroke-width=".5" stroke-dasharray="1.200 .8"/>
    <text x="747.800" y="1000.1" text-anchor="middle">班级管理</text>
    <path d="M701 1010.2H800.300" stroke="#3a3f45" stroke-width=".5" stroke-dasharray="1.200 .8"/>
    <text x="747.800" y="1025.3" text-anchor="middle">签到管理</text>
    <path d="M701 1035.5H800.300" stroke="#3a3f45" stroke-width=".5" stroke-dasharray="1.200 .8"/>
    </g>
    <!-- content header -->
    <rect x="800.300" y="836" width="425.700" height="22" fill="#f0f0f0"/>
    <text x="812" y="848.600" font-size="6.200" fill="#9a9a9a">学生管理</text>
    <path d="M1183.500 846.300L1185.800 844.200L1188.100 846.300M1184.100 846V848.200H1187.500V846" fill="none" stroke="#e8524e" stroke-width=".6"/>
    <text x="1190.500" y="848" font-size="4.800" fill="#555"><tspan fill="#e8524e">/</tspan> 学生管理 <tspan fill="#e8524e">/</tspan> 学生管理</text>
    <!-- search form -->
    <g font-size="5" fill="#555">
      <text x="806.300" y="879.200">学生姓名</text>
      <rect x="829.400" y="869" width="52.900" height="16" rx="2" fill="#fff" stroke="#e1e1e1" stroke-width=".6"/>
      <text x="833.200" y="879.200" fill="#a9a9a9" font-size="4.600">学生姓名</text>
      <text x="883" y="879.200">班级名称</text>
      <rect x="905.400" y="869" width="53.300" height="16" rx="2" fill="#fff" stroke="#e1e1e1" stroke-width=".6"/>
      <text x="909.200" y="879.200" fill="#a9a9a9" font-size="4.600">班级名称</text>
    </g>
    <defs>
      <linearGradient id="gbtn" x1="0" x2="1"><stop offset="0" stop-color="#0e8a5f"/><stop offset="1" stop-color="#3cb371"/></linearGradient>
      <linearGradient id="rbtn" x1="0" x2="1"><stop offset="0" stop-color="#ff4b2b"/><stop offset="1" stop-color="#ff416c"/></linearGradient>
      <linearGradient id="photo2" x1="0" y1="0" x2="1" y2="1"><stop offset="0" stop-color="#b9bfc6"/><stop offset=".5" stop-color="#d5d9dd"/><stop offset="1" stop-color="#b4bac1"/></linearGradient>
    </defs>
    <g font-size="5" font-weight="700" fill="#fff" text-anchor="middle">
      <rect x="971.900" y="869" width="23.300" height="16.800" rx="1.500" fill="url(#gbtn)"/><text x="983.500" y="879.300">查询</text>
      <rect x="1000.500" y="869" width="22.900" height="16.800" rx="1.500" fill="#454a5e"/><text x="1012" y="879.300">添加</text>
      <rect x="1028.700" y="869" width="34.600" height="16.800" rx="1.500" fill="url(#rbtn)"/><text x="1046" y="879.300">批量删除</text>
    </g>
    <!-- table -->
    <rect x="811.800" y="904.200" width="414.200" height="59.500" fill="#f2f2f2"/>
    <rect x="811.800" y="1005" width="414.200" height=".6" fill="#e4e4e4"/>
    <g fill="#dcdfe4"><rect x="818.200" y="909" width="6.200" height="6.200"/><rect x="818.200" y="929.300" width="6.200" height="6.200"/><rect x="818.200" y="971.600" width="6.200" height="6.200"/></g>
    <g font-size="5" font-weight="700" fill="#5a5a5a" text-anchor="middle">
      <text x="839.800" y="914">账户</text><text x="864.400" y="914">学生姓名</text><text x="887.400" y="914">性别</text><text x="935.600" y="914">身份证号</text>
      <text x="1002.300" y="914">手机号</text><text x="1058.400" y="914">照片</text><text x="1103.600" y="914">班级名称</text><text x="1179" y="914">操作</text>
    </g>
    <g font-size="5.300" fill="#2eaa4e" text-anchor="middle">
      <text x="839.800" y="934.300">111</text><text x="864.400" y="934.300">王五</text><text x="887.400" y="934.300">女</text><text x="935.600" y="934.300">411324198011220122</text>
      <text x="1002.300" y="934.300">13526235244</text><text x="1103.600" y="934.300">一一班</text>
      <text x="839.800" y="976.600">333</text><text x="864.400" y="976.600">张三</text><text x="887.400" y="976.600">男</text><text x="935.600" y="976.600">411324198011220111</text>
      <text x="1002.300" y="976.600">13526235211</text><text x="1103.600" y="976.600">二二班</text>
    </g>
    <!-- photo 1 -->
    <rect x="1039.300" y="923.100" width="38.500" height="37.800" fill="#fff"/>
    <path d="M1039.300 935.300C1044 932.800 1049 930.200 1054.800 930C1061 929.800 1067.500 932 1071.600 935.700C1074.500 938.400 1075.300 942 1075.100 945.400C1075 949 1075 952.500 1073.800 955.200C1072.500 957.600 1069.800 959.200 1067.200 960.700" fill="none" stroke="#111" stroke-width="1.300"/>
    <ellipse cx="1048.800" cy="941.500" rx=".9" ry=".55" fill="#222"/><ellipse cx="1059.200" cy="940.600" rx=".9" ry=".55" fill="#222"/>
    <path d="M1052.100 946.100C1053 947.600 1054.200 948.400 1055.500 948.500C1056.600 948 1057.500 947.200 1057.900 946.100" fill="none" stroke="#111" stroke-width="1"/>
    <text transform="translate(1065.400 934.400) rotate(12)" font-size="15" font-weight="700" fill="#2b90ea">?</text>
    <!-- photo 2 -->
    <defs><radialGradient id="photo2r" cx=".75" cy=".55" r=".8"><stop offset="0" stop-color="#e6e9ec"/><stop offset=".6" stop-color="#cfd4d9"/><stop offset="1" stop-color="#bcc2c9"/></radialGradient></defs>
    <rect x="1039.300" y="965.200" width="38.500" height="38.200" fill="url(#photo2r)"/>
    <g fill="#c3222d">
      <ellipse cx="1054.800" cy="989.500" rx="7" ry="10.500" transform="rotate(12 1054.800 989.500)"/>
      <circle cx="1058.600" cy="976.600" r="4.800"/>
      <path d="M1051 984L1047.200 972L1049.800 970.600L1054.500 980.500Z"/>
      <circle cx="1048.800" cy="972" r="1.900"/>
      <path d="M1060 986.500L1064.500 979L1067.200 981L1063 989.500Z"/>
      <circle cx="1066" cy="979.300" r="1.900"/>
      <path d="M1050 995L1048.200 1002.500L1053.500 1002L1056 996Z"/>
      <circle cx="1058.500" cy="971" r="1.500"/>
    </g>
    <circle cx="1058.500" cy="971" r=".7" fill="#e9b8bb"/>
    <ellipse cx="1058.900" cy="977.300" rx="3.100" ry="3" fill="#ead6c0"/>
    <circle cx="1057.800" cy="976.700" r=".4" fill="#333"/><circle cx="1060.300" cy="976.900" r=".4" fill="#333"/>
    <ellipse cx="1055.500" cy="985.700" rx="2" ry="3.600" fill="#8b8582" transform="rotate(35 1055.500 985.700)"/>
    <text x="1059" y="997.500" font-size="4.600" font-weight="700" fill="#fff" stroke="#444" stroke-width=".3" text-anchor="middle" paint-order="stroke">一起冲飞</text>
    <!-- row buttons -->
    <g font-size="5" font-weight="700" fill="#fff" text-anchor="middle">
      <rect x="1141" y="926.300" width="23" height="12.700" rx="1.300" fill="#18a349"/><text x="1152.500" y="934.500">查看</text>
      <rect x="1168" y="926.300" width="22.800" height="12.700" rx="1.300" fill="#454a5e"/><text x="1179.400" y="934.500">修改</text>
      <rect x="1194.500" y="926.300" width="22.900" height="12.700" rx="1.300" fill="url(#rbtn)"/><text x="1206" y="934.500">删除</text>
      <rect x="1141" y="968.800" width="23" height="12.800" rx="1.300" fill="#18a349"/><text x="1152.500" y="977">查看</text>
      <rect x="1168" y="968.800" width="22.800" height="12.800" rx="1.300" fill="#454a5e"/><text x="1179.400" y="977">修改</text>
      <rect x="1194.500" y="968.800" width="22.900" height="12.800" rx="1.300" fill="url(#rbtn)"/><text x="1206" y="977">删除</text>
    </g>
    <rect x="808.300" y="1013.600" width="17.700" height="6" rx="1" fill="#fff" stroke="#cfcfcf" stroke-width=".5"/>
  </svg>
  <div class="abs" style="left:364px;top:149px;width:862px;height:5px;background:linear-gradient(180deg,rgba(110,130,140,.26),rgba(110,130,140,.06) 60%,rgba(110,130,140,0))"></div>
</div></div>

<!-- ===== STATUS BAR ===== -->
<div id="status">
  <div class="t" style="left:16px">页面: 20/28</div>
  <div class="vsep" style="left:92px"></div>
  <div class="t" style="left:105px">字数: 10119</div>
  <div class="vsep" style="left:183px"></div>
  <div class="t" style="left:196px">拼写检查: 打开</div>
  <svg style="left:281px;top:9px" width="8" height="5" viewBox="0 0 8 5" fill="none" stroke="#2f3235" stroke-width="1.200"><path d="M1 0.800L4 3.800L7 0.800"/></svg>
  <svg style="left:310px;top:4px" width="16" height="15" viewBox="0 0 16 15" fill="none" stroke="#2f3235" stroke-width="1" stroke-linejoin="round"><path d="M6 14.200H1.800A.8 .8 0 0 1 1 13.400V1.800A.8 .8 0 0 1 1.800 1H11.200A.8 .8 0 0 1 12 1.800V5.500"/><path d="M3.500 4H9.500"/><path d="M11 7.600L15 14.200H7Z"/><path d="M11 10V12" stroke-width=".9"/></svg>
  <div class="t" style="left:329px">AI 校对</div>
  <svg style="left:374px;top:9px" width="8" height="5" viewBox="0 0 8 5" fill="none" stroke="#2f3235" stroke-width="1.200"><path d="M1 0.800L4 3.800L7 0.800"/></svg>
  <div class="vsep" style="left:395px"></div>
  <svg style="left:411px;top:5px" width="14" height="12" viewBox="0 0 14 12"><path d="M7 .8L13.200 11.200H.8Z" fill="#f7b54a" stroke="#f7b54a" stroke-width="1" stroke-linejoin="round"/><path d="M7 4.200V8M7 9.300V10.300" stroke="#6b4a12" stroke-width="1.300"/></svg>
  <div class="t" style="left:430px">缺失字体</div>
  <div class="vsep" style="left:492px"></div>
  <div class="t" style="left:505px">兼容模式</div>
</div>

</body>
</html>
